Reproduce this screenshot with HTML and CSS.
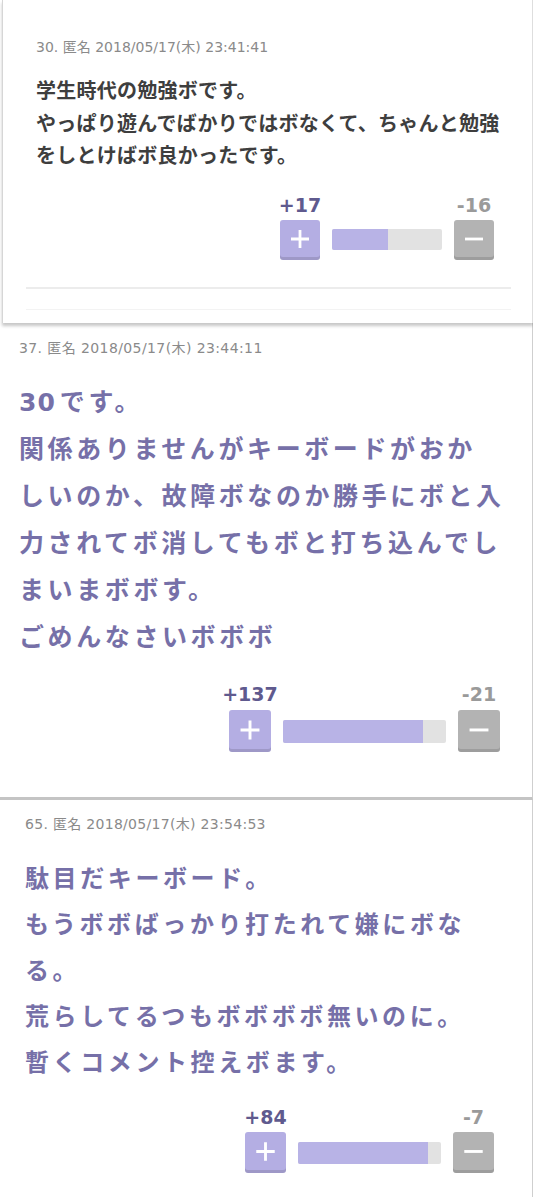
FILE: index.html
```html
<!DOCTYPE html>
<html lang="ja">
<head>
    <meta charset="UTF-8">
    <meta name="viewport" content="width=device-width, initial-scale=1.0">
    <title>コメント</title>
    <link rel="stylesheet" href="styles.css">
</head>
<body>

<!-- コメント 30 -->
<div class="comment card" id="res30">
    <div class="head">30. 匿名 2018/05/17(木) 23:41:41</div>
    <div class="body">学生時代の勉強ボです。<br>やっぱり遊んでばかりではボなくて、ちゃんと勉強をしとけばボ良かったです。</div>
    <div class="vote">
        <div class="side">
            <span class="count plus">+17</span>
            <span class="btn plus"><svg viewBox="0 0 40 40"><path d="M11 19H29M20 10V28"/></svg></span>
        </div>
        <div class="bar"><div class="fill" style="width: 51%"></div></div>
        <div class="side">
            <span class="count minus">-16</span>
            <span class="btn minus"><svg viewBox="0 0 40 40"><path d="M11 19H29"/></svg></span>
        </div>
    </div>
    <div class="foot"></div>
</div>

<!-- コメント 37 (スクショの改行位置をそのまま) -->
<div class="comment big" id="res37">
    <div class="head">37. 匿名 2018/05/17(木) 23:44:11</div>
    <div class="body"><span class="num">30</span>です。<br>関係ありませんがキーボードがおか<br>しいのか、故障ボなのか勝手にボと入<br>力されてボ消してもボと打ち込んでし<br>まいまボボす。<br>ごめんなさいボボボ</div>
    <div class="vote">
        <div class="side">
            <span class="count plus">+137</span>
            <span class="btn plus"><svg viewBox="0 0 40 40"><path d="M11 19H29M20 10V28"/></svg></span>
        </div>
        <div class="bar"><div class="fill" style="width: 86%"></div></div>
        <div class="side">
            <span class="count minus">-21</span>
            <span class="btn minus"><svg viewBox="0 0 40 40"><path d="M11 19H29"/></svg></span>
        </div>
    </div>
</div>

<!-- コメント 65 -->
<div class="comment last" id="res65">
    <div class="head">65. 匿名 2018/05/17(木) 23:54:53</div>
    <div class="body">駄目だキーボード。<br>もうボボばっかり打たれて嫌にボなる。<br>荒らしてるつもボボボボ無いのに。<br>暫くコメント控えボます。</div>
    <div class="vote">
        <div class="side">
            <span class="count plus">+84</span>
            <span class="btn plus"><svg viewBox="0 0 40 40"><path d="M11 19H29M20 10V28"/></svg></span>
        </div>
        <div class="bar"><div class="fill" style="width: 91%"></div></div>
        <div class="side">
            <span class="count minus">-7</span>
            <span class="btn minus"><svg viewBox="0 0 40 40"><path d="M11 19H29"/></svg></span>
        </div>
    </div>
</div>

</body>
</html>
```

FILE: styles.css
```css
* {
    box-sizing: border-box;
    margin: 0;
    padding: 0;
}

body {
    font-family: 'DejaVu Sans', 'Noto Sans CJK JP', sans-serif;
    background-color: #fff;
    width: 533px;
    overflow: hidden;
}

.comment {
    --btn: 40px;
    --bar: 110px;
    --bar-h: 21px;
    --gap: 12px;
    background-color: #fff;
}

.head {
    font-size: 14px;
    line-height: 18px;
    color: #8a8a8a;
}

.body {
    font-weight: bold;
}

/* 投票エリア */
.vote {
    display: flex;
    justify-content: flex-end;
    align-items: flex-end;
    gap: var(--gap);
}

.side {
    width: var(--btn);
    display: flex;
    flex-direction: column;
    align-items: center;
    gap: 5px;
}

.count {
    font-size: 19px;
    line-height: 20px;
    font-weight: bold;
    white-space: nowrap;
}

.count.plus {
    color: #5f5a8e;
}

.count.minus {
    color: #9a9a9a;
}

.btn {
    display: block;
    width: var(--btn);
    height: var(--btn);
    border-radius: 3px;
    box-shadow: inset 0 -3px 0 rgba(0, 0, 0, 0.12);
}

.btn svg {
    display: block;
    width: 100%;
    height: 100%;
    fill: none;
    stroke: #fff;
    stroke-width: 2.8;
}

.btn.plus {
    background-color: #b4aee3;
}

.btn.minus {
    background-color: #b3b3b3;
}

.bar {
    width: var(--bar);
    height: var(--bar-h);
    margin-bottom: calc((var(--btn) - var(--bar-h)) / 2);
    background-color: #e2e2e2;
    border-radius: 2px;
    overflow: hidden;
}

.fill {
    height: 100%;
    background-color: #b8b3e6;
}

/* 1件目: カード */
.card {
    margin-left: 2px;
    border-left: 1px solid #d6d6d6;
    border-right: 1px solid #dedede;
    padding: 38px 0 0 33px;
    box-shadow: 0 3px 3px rgba(0, 0, 0, 0.22);
    position: relative;
    z-index: 1;
}

.card .body {
    margin-top: 19px;
    padding-right: 18px;
    font-size: 20px;
    line-height: 32.5px;
    letter-spacing: 0.25px;
    color: #3e3e3e;
}

.card .vote {
    margin: 22px 38px 0 0;
}

.foot {
    margin: 27px 21px 0 -10px;
    height: 36px;
    border-top: 2px solid #ececec;
}

.foot::after {
    content: "";
    display: block;
    margin-top: 20px;
    border-top: 1px solid #f3f3f3;
}

/* 2件目 */
.big {
    --btn: 42px;
    --bar: 163px;
    --bar-h: 23px;
    padding: 16px 0 45px 19px;
    border-right: 1px solid #cfcfcf;
    border-bottom: 3px solid #c4c4c4;
}

.big .head {
    letter-spacing: 0.4px;
}

.big .body {
    margin-top: 22.6px;
    font-size: 25px;
    line-height: 47px;
    letter-spacing: 3.6px;
    white-space: nowrap;
    color: #7670a8;
}

.big .num {
    letter-spacing: 1px;
    margin-right: 4px;
}

.big .vote {
    margin: 23.4px 32px 0 0;
}

.big .side {
    gap: 6px;
}

/* 3件目 */
.last {
    --btn: 41px;
    --bar: 143px;
    --bar-h: 22px;
    padding: 15px 0 24px 25px;
    border-right: 1px solid #cfcfcf;
}

.last .head {
    letter-spacing: 0.3px;
}

.last .body {
    margin-top: 22.6px;
    padding-right: 50px;
    font-size: 24px;
    line-height: 46px;
    letter-spacing: 3.6px;
    color: #7670a8;
}

.last .vote {
    margin: 21.4px 38px 0 0;
}
```
